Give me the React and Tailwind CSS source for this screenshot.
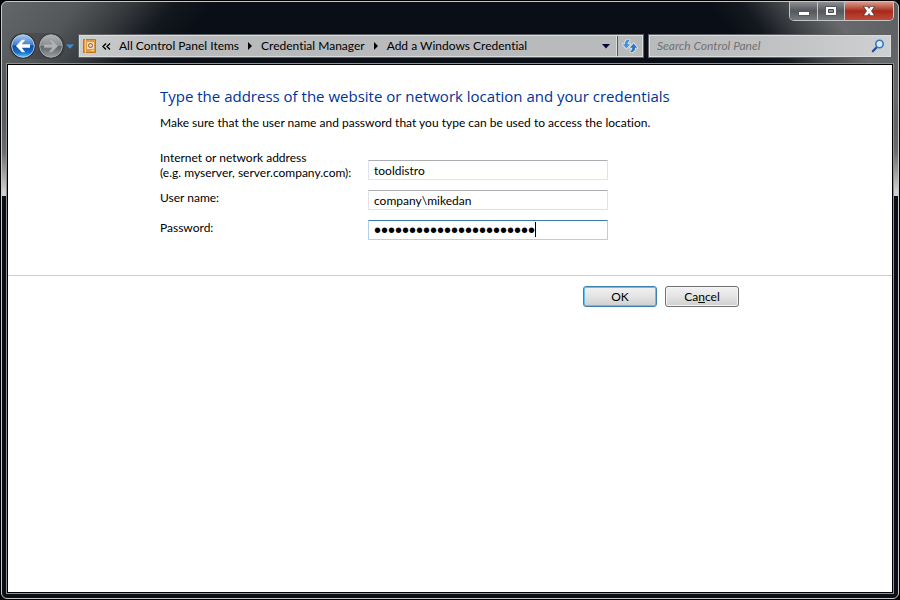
import React, { useState } from 'react'

const crumbs = ['All Control Panel Items', 'Credential Manager', 'Add a Windows Credential']

const frameBackground =
  'bg-[#0a0f17] bg-no-repeat bg-[image:linear-gradient(to_bottom,transparent_85px,#6b6c6f_150px,#d2d0d0_190px),linear-gradient(130deg,#64676a_0px,#54575a_60px,#3a3d40_95px,#12161d_135px,transparent_165px),linear-gradient(232deg,#5c5f62_0px,#67696c_60px,#45484b_90px,#14181f_125px,transparent_150px)] bg-[size:100%_194px]'

function NavButtons() {
  return (
    <div className="flex h-7 shrink-0 items-center">
      <div className="flex items-center rounded-full bg-black/15">
        <button aria-label="Back" className="h-[26px] w-[28px]">
          <svg viewBox="0 0 28 26" className="h-full w-full">
            <defs>
              <linearGradient id="back" x1="0" y1="0" x2="0" y2="1">
                <stop offset="0" stopColor="#a9c9ee" />
                <stop offset="0.45" stopColor="#3f80cf" />
                <stop offset="0.5" stopColor="#0d4ba5" />
                <stop offset="0.8" stopColor="#1a72cf" />
                <stop offset="1" stopColor="#5fd0fa" />
              </linearGradient>
            </defs>
            <circle cx="14" cy="13" r="12.5" fill="#24272b" />
            <circle cx="14" cy="13" r="11.3" fill="url(#back)" stroke="#c5d6ea" strokeWidth="0.9" />
            <path d="M7 13 13 6.800h3.200L12.800 11.200H21v3.600h-8.200L16.200 19.200H13z" fill="#fff" />
          </svg>
        </button>
        <button aria-label="Forward" className="h-[26px] w-[28px]">
          <svg viewBox="0 0 28 26" className="h-full w-full">
            <defs>
              <linearGradient id="forward" x1="0" y1="0" x2="0" y2="1">
                <stop offset="0" stopColor="#b0b2b4" />
                <stop offset="0.48" stopColor="#8b8d90" />
                <stop offset="0.52" stopColor="#5f6265" />
                <stop offset="1" stopColor="#9b9da0" />
              </linearGradient>
            </defs>
            <circle cx="14" cy="13" r="12.5" fill="#303337" />
            <circle cx="14" cy="13" r="11.3" fill="url(#forward)" stroke="#aeb0b2" strokeWidth="0.9" />
            <path d="M21 13 15 6.800h-3.200l3.400 4.400H7v3.600h8.200L11.800 19.200H15z" fill="#b0b2b4" stroke="#8d9092" strokeWidth="0.5" />
          </svg>
        </button>
      </div>
      <button aria-label="Recent pages" className="flex h-6 w-[9px] items-center justify-end">
        <svg viewBox="0 0 8 5" className="h-[5px] w-2">
          <path d="M0 0.5h8L4 4.8z" fill="#3b8fe0" />
        </svg>
      </button>
    </div>
  )
}

function CaptionButtons() {
  return (
    <div className="flex h-[19px] shrink-0 overflow-hidden rounded-b-[5px] border border-t-0 border-[#c4c5c6]">
      <button
        aria-label="Minimize"
        className="flex w-7 items-center justify-center border-r border-[#c4c5c6] bg-linear-to-b from-[#8d8f92] via-[#54575b] to-[#777a7d]"
      >
        <svg viewBox="0 0 12 10" className="h-[10px] w-3">
          <rect x="0.5" y="5.5" width="11" height="4" fill="#fff" stroke="#55585c" />
        </svg>
      </button>
      <button
        aria-label="Maximize"
        className="flex w-[27px] items-center justify-center border-r border-[#c4c5c6] bg-linear-to-b from-[#8d8f92] via-[#54575b] to-[#777a7d]"
      >
        <svg viewBox="0 0 12 10" className="h-[10px] w-3">
          <path d="M0.5 0.5h11v9h-11z" fill="#fff" stroke="#55585c" />
          <path d="M3.5 3.5h5v3h-5z" fill="#8d8f92" stroke="#45484c" />
        </svg>
      </button>
      <button
        aria-label="Close"
        className="flex w-[48px] items-center justify-center bg-linear-to-b from-[#d8988c] via-[#a8281a] to-[#bd4a38]"
      >
        <svg viewBox="0 0 12 10" className="h-[10px] w-3">
          <path
            d="M1 0.8h3.400L6 2.900 7.600 0.800H11L8 5l3 4.200H7.600L6 7.100 4.400 9.200H1L4 5z"
            fill="#fff"
            stroke="#5e4544"
            strokeWidth="1.6"
            paintOrder="stroke"
          />
        </svg>
      </button>
    </div>
  )
}

function AddressBar() {
  return (
    <div className="flex h-6 min-w-0 flex-1 border border-[#5f6265] text-black">
      <nav className="flex min-w-0 flex-1 items-center border border-[#dcdddd] bg-linear-to-r from-[#cbcccc] via-[#b9babc] via-20% to-[#b9babc] pl-[3px]">
        <svg viewBox="0 0 14 16" className="h-4 w-[14px] shrink-0">
          <path d="M0.5 1.5h12v13h-12z" fill="#e39a3c" stroke="#bd7722" />
          <path d="M2.5 1v14" stroke="#f5c67e" />
          <path d="M4.5 4.5h6v6h-6z" fill="#dcd9d5" stroke="#f0dfc5" />
          <circle cx="7.5" cy="7.5" r="2" fill="none" stroke="#9a5a3a" />
          <path d="M8 12.5h3" stroke="#f3cf9a" />
        </svg>
        <svg viewBox="0 0 9 7" className="mr-2 ml-[5px] h-[7px] w-[9px] shrink-0">
          <path d="M4 0.5 1 3.5l3 3M8 0.5 5 3.5l3 3" fill="none" stroke="#000" strokeWidth="1.4" />
        </svg>
        {crumbs.map((crumb, i) => (
          <React.Fragment key={crumb}>
            {i > 0 && (
              <svg viewBox="0 0 4 8" className="mx-[9px] h-2 w-1 shrink-0">
                <path d="M0 0l4 4-4 4z" fill="#000" />
              </svg>
            )}
            <a href="#" className="whitespace-nowrap">{crumb}</a>
          </React.Fragment>
        ))}
        <button aria-label="Previous locations" className="ml-auto flex w-5 justify-center">
          <svg viewBox="0 0 8 5" className="h-[5px] w-2">
            <path d="M0 0h8L4 4.6z" fill="#05053a" />
          </svg>
        </button>
      </nav>
      <button
        aria-label="Refresh"
        className="flex w-[26px] items-center justify-center border border-l-0 border-[#dcdddd] bg-[#b9babc] shadow-[inset_1px_0_0_#55585c]"
      >
        <svg viewBox="0 0 16 14" className="h-[14px] w-4">
          <g stroke="#e6ebf0" strokeWidth="1.6" strokeLinejoin="round" fill="#2f76c4" paintOrder="stroke">
            <path d="M7.500 0.600C4.200 0.500 2.700 2.600 2.800 5.200H0.600L4.400 9.600 8.200 5.200H5.800C5.700 3.600 6.200 2.500 7.500 2.200z" fill="#4a92d8" />
            <path d="M8.500 13.400c3.300.1 4.800-2 4.700-4.600h2.200L11.600 4.400 7.800 8.800h2.400c.1 1.600-.4 2.700-1.700 3z" />
          </g>
        </svg>
      </button>
    </div>
  )
}

function SearchBox() {
  return (
    <div className="w-[244px] shrink-0 border border-[#5f6265]">
      <label className="flex h-[22px] items-center border border-[#dcdddd] bg-linear-to-r from-[#b9babc] via-[#c0c1c2] to-[#cfd0d1] pr-[5px] pl-[7px]">
        <input
          type="search"
          aria-label="Search Control Panel"
          placeholder="Search Control Panel"
          className="min-w-0 flex-1 bg-transparent italic outline-none placeholder:text-[#707275]"
        />
        <svg viewBox="0 0 14 14" className="h-[14px] w-[14px] shrink-0">
          <path d="M6 8 1.800 12.200" stroke="#1f4f93" strokeWidth="2.200" strokeLinecap="round" />
          <circle cx="8.500" cy="5" r="3.700" fill="#dce9f5" stroke="#2f78c8" strokeWidth="1.600" />
        </svg>
      </label>
    </div>
  )
}

function Field({ id, label, type = 'text', value, onChange, focused }) {
  return (
    <div className="flex gap-2">
      <label htmlFor={id} className="w-[200px] leading-[15px] whitespace-nowrap">
        {label}
      </label>
      <div className="relative w-60 self-end">
        <input
          id={id}
          type={type}
          value={value}
          onChange={(e) => onChange(e.target.value)}
          className={`block h-5 w-full rounded-[1px] border bg-white px-[5px] outline-none ${
            focused
              ? "border-[#b5cfe7] border-t-[#3d7bad] font-['Liberation_Sans',sans-serif] text-[20px]"
              : 'border-[#e2e3ea] border-t-[#abadb3]'
          }`}
        />
        {/* Text cursor at the end of the value */}
        {focused && <span className="absolute top-[2px] left-[167px] h-[15px] w-px bg-black" />}
      </div>
    </div>
  )
}

export default function App() {
  const [address, setAddress] = useState('tooldistro')
  const [userName, setUserName] = useState('company\\mikedan')
  const [password, setPassword] = useState('mikedan-company-passwrd')

  return (
    <div className="flex min-h-screen bg-black p-px font-['Lato','Open_Sans',sans-serif] text-[12px] leading-4 text-black [font-variant-ligatures:none]">
      <div className={`flex flex-1 flex-col rounded-[6px] border border-[#c6c7c8] px-1 pb-1 ${frameBackground}`}>
        {/* Title bar */}
        <header className="flex justify-end">
          <CaptionButtons />
        </header>

        {/* Navigation */}
        <div className="mt-[11px] mb-[3px] flex items-center gap-1 pr-[2px] pl-[3px]">
          <NavButtons />
          <AddressBar />
          <SearchBox />
        </div>

        <main className="flex-1 border border-[#8e9194]">
          <div className="h-full border border-black bg-white">
            <form onSubmit={(e) => e.preventDefault()}>
              <section className="border-b border-[#cccccc] pr-4 pb-[35px] pl-[152px]">
                <h1 className="pt-5 font-['Open_Sans','Noto_Sans',sans-serif] text-[15px] leading-[22px] text-[#003399]">
                  Type the address of the website or network location and your credentials
                </h1>
                <p className="mt-2">
                  Make sure that the user name and password that you type can be used to access the location.
                </p>

                <div className="mt-[19px] flex flex-col gap-[10px]">
                  <Field
                    id="address"
                    label={<>Internet or network address<br />(e.g. myserver, server.company.com):</>}
                    value={address}
                    onChange={setAddress}
                  />
                  <Field id="user" label="User name:" value={userName} onChange={setUserName} />
                  <Field id="password" label="Password:" type="password" value={password} onChange={setPassword} focused />
                </div>
              </section>

              <div className="flex justify-end gap-2 pt-[10px] pr-[153px]">
                <button
                  type="submit"
                  className="h-[21px] w-[74px] rounded-[3px] border border-[#3c7fb1] bg-linear-to-b from-[#f2f2f2] via-[#e4e4e4] to-[#cfcfcf] shadow-[inset_0_0_0_1px_#5cc4f2]"
                >
                  OK
                </button>
                <button
                  type="button"
                  className="h-[21px] w-[74px] rounded-[3px] border border-[#707070] bg-linear-to-b from-[#f2f2f2] via-[#e4e4e4] to-[#cfcfcf] shadow-[inset_0_0_0_1px_#f6f6f6]"
                >
                  Ca<u>n</u>cel
                </button>
              </div>
            </form>
          </div>
        </main>
      </div>
    </div>
  )
}
